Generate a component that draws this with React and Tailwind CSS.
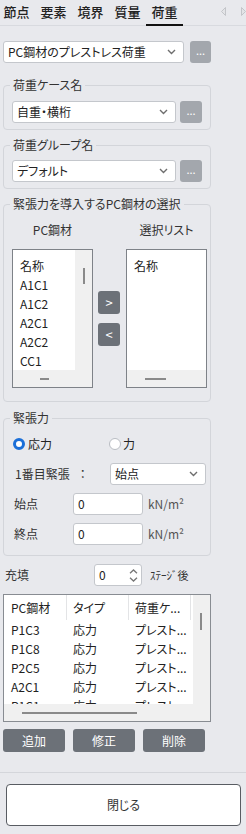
import React from 'react';

const tabs = ['節点', '要素', '境界', '質量', '荷重'];

const Chevron = () => (
  <svg width="9" height="6" viewBox="0 0 9 6" className="shrink-0">
    <path d="M1 1l3.5 3.5L8 1" stroke="#6e6e6e" strokeWidth="1.4" fill="none" />
  </svg>
);

const Select = ({ value, className }) => (
  <div className={`h-[22px] flex items-center justify-between bg-white border border-[#c4c7cc] rounded-[3px] pl-[4px] pr-[7px] ${className}`}>
    <span className="whitespace-nowrap">{value}</span>
    <Chevron />
  </div>
);

const DotsButton = ({ className }) => (
  <div className={`h-[22px] flex items-center justify-center bg-[#a3a7ad] rounded-[3px] text-white text-[11px] leading-none pb-[3px] ${className}`}>
    ...
  </div>
);

const Legend = ({ children }) => (
  <legend className="-ml-[2px] px-[3px] leading-[16px] text-[#333]">{children}</legend>
);

const leftItems = ['名称', 'A1C1', 'A1C2', 'A2C1', 'A2C2', 'CC1'];

const rows = [
  ['P1C3', '応力', 'プレスト...'],
  ['P1C8', '応力', 'プレスト...'],
  ['P2C5', '応力', 'プレスト...'],
  ['A2C1', '応力', 'プレスト...'],
  ['P1C1', '応力', 'プレスト...'],
];

export default function App() {
  return (
    <div className="w-[246px] h-[834px] overflow-hidden bg-[#e8e9ed] text-[12px] leading-[16px] text-[#222] font-['Noto_Sans_CJK_JP','Noto_Sans',sans-serif] [font-feature-settings:'palt']">
      {/* Tab bar */}
      <div className="flex h-[26px] border-b border-[#d8dadf]">
        <div className="flex -ml-[2px]">
          {tabs.map((t) => (
            <div
              key={t}
              className={
                t === '荷重'
                  ? 'h-[26px] w-[37px] flex justify-center pt-[4px] text-[13px] font-medium border-b-2 border-[#111]'
                  : 'h-[26px] w-[37px] flex justify-center pt-[4px] text-[13px] font-medium'
              }
            >
              {t}
            </div>
          ))}
        </div>
        <div className="ml-auto flex items-center gap-[15px] pb-[2px]">
          <svg width="5" height="9" viewBox="0 0 5 9">
            <path d="M4.5 0.5L0.5 4.5L4.5 8.5Z" fill="#e3e4e7" stroke="#c3c5c9" strokeWidth="1" />
          </svg>
          <svg width="5" height="9" viewBox="0 0 5 9">
            <path d="M0.5 0.5L4.5 4.5L0.5 8.5Z" fill="#e3e4e7" stroke="#c3c5c9" strokeWidth="1" />
          </svg>
        </div>
      </div>

      {/* Load type */}
      <div className="mt-[15px] ml-[3px] flex gap-[6px]">
        <Select value="PC鋼材のプレストレス荷重" className="w-[181px]" />
        <DotsButton className="w-[21px]" />
      </div>

      {/* Load case */}
      <fieldset className="mt-[14px] ml-[3px] w-[208px] border border-[#d3d5da] rounded-[4px] pl-[8px] pt-[8px] pb-[6px]">
        <Legend>荷重ケース名</Legend>
        <div className="flex gap-[4px]">
          <Select value="自重・横桁" className="w-[164px]" />
          <DotsButton className="w-[22px]" />
        </div>
      </fieldset>

      {/* Load group */}
      <fieldset className="mt-[7px] ml-[3px] w-[208px] border border-[#d3d5da] rounded-[4px] pl-[8px] pt-[7px] pb-[6px]">
        <Legend>荷重グループ名</Legend>
        <div className="flex gap-[4px]">
          <Select value="デフォルト" className="w-[164px]" />
          <DotsButton className="w-[22px]" />
        </div>
      </fieldset>

      {/* PC strand selection */}
      <fieldset className="mt-[7px] ml-[3px] w-[208px] border border-[#d3d5da] rounded-[4px] pl-[8px] pt-[8px] pb-[13px]">
        <Legend>緊張力を導入するPC鋼材の選択</Legend>
        <div className="flex h-[20px] items-center text-[#333]">
          <div className="w-[81px] text-center">PC鋼材</div>
          <div className="w-[33px]" />
          <div className="w-[81px] text-center">選択リスト</div>
        </div>
        <div className="mt-[9px] flex">
          <div className="w-[81px] h-[139px] border border-[#7e8288] bg-white flex flex-col">
            <div className="flex flex-1 min-h-0">
              <div className="flex-1 pl-[7px] pt-[6px] overflow-hidden">
                {leftItems.map((it) => (
                  <div key={it} className="h-[19px] flex items-center">{it}</div>
                ))}
              </div>
              <div className="w-[17px] bg-[#f0f0f0] flex justify-center">
                <div className="mt-[18px] w-[2px] h-[16px] bg-[#8a8a8a]" />
              </div>
            </div>
            <div className="h-[17px] bg-[#f0f0f0] flex items-center">
              <div className="ml-[27px] w-[9px] h-[2px] bg-[#8a8a8a]" />
            </div>
          </div>
          <div className="ml-[5px] w-[22px] flex flex-col justify-center gap-[9px]">
            <div className="h-[23px] rounded-[3px] bg-[#6c7178] text-white text-[13px] flex items-center justify-center">&gt;</div>
            <div className="h-[23px] rounded-[3px] bg-[#6c7178] text-white text-[13px] flex items-center justify-center">&lt;</div>
          </div>
          <div className="ml-[6px] w-[81px] h-[139px] border border-[#7e8288] bg-white flex flex-col">
            <div className="flex-1 pl-[7px] pt-[6px]">
              <div className="h-[19px] flex items-center">名称</div>
            </div>
            <div className="h-[17px] bg-[#f0f0f0] flex items-center">
              <div className="ml-[18px] w-[21px] h-[2px] bg-[#8a8a8a]" />
            </div>
          </div>
        </div>
      </fieldset>

      {/* Tension */}
      <fieldset className="mt-[8px] ml-[3px] w-[208px] border border-[#d3d5da] rounded-[4px] pl-[8px] pt-[9px] pb-[10px]">
        <Legend>緊張力</Legend>
        <div className="h-[18px] flex items-center">
          <div className="ml-[1px] w-[96px] flex items-center gap-[3px]">
            <span className="w-[12px] h-[12px] rounded-full border-[3.5px] border-[#1b6fd8] bg-white" />
            <span>応力</span>
          </div>
          <div className="flex items-center gap-[2px]">
            <span className="w-[12px] h-[12px] rounded-full border border-[#b9bdc3] bg-white" />
            <span>力</span>
          </div>
        </div>
        <div className="mt-[10px] flex items-center">
          <div className="w-[98px] flex items-center text-[#333]">
            <span className="ml-[3px]">1番目緊張</span>
            <span className="ml-[10px]">：</span>
          </div>
          <Select value="始点" className="w-[96px]" />
        </div>
        <div className="mt-[8px] flex items-center">
          <div className="w-[61px] pl-[2px] text-[#333]">始点</div>
          <div className="w-[70px] h-[22px] bg-white border border-[#c4c7cc] rounded-[3px] pl-[4px] flex items-center">0</div>
          <span className="ml-[5px] text-[#555]">kN/m²</span>
        </div>
        <div className="mt-[8px] flex items-center">
          <div className="w-[61px] pl-[2px] text-[#333]">終点</div>
          <div className="w-[70px] h-[22px] bg-white border border-[#c4c7cc] rounded-[3px] pl-[4px] flex items-center">0</div>
          <span className="ml-[5px] text-[#555]">kN/m²</span>
        </div>
      </fieldset>

      {/* Grout */}
      <div className="mt-[8px] ml-[5px] h-[22px] flex items-center">
        <div className="w-[89px] text-[#333]">充填</div>
        <div className="w-[48px] h-[22px] bg-white border border-[#c4c7cc] rounded-[3px] pl-[4px] pr-[3px] flex items-center justify-between">
          <span>0</span>
          <div className="flex flex-col gap-[3px]">
            <svg width="9" height="5" viewBox="0 0 9 5">
              <path d="M1 4.2L4.5 1L8 4.2" stroke="#777" strokeWidth="1.3" fill="none" />
            </svg>
            <svg width="9" height="5" viewBox="0 0 9 5">
              <path d="M1 0.8L4.5 4L8 0.8" stroke="#777" strokeWidth="1.3" fill="none" />
            </svg>
          </div>
        </div>
        <span className="ml-[8px] text-[11px] text-[#333]">ｽﾃｰｼﾞ後</span>
      </div>

      {/* Table */}
      <div className="mt-[8px] ml-[3px] w-[208px] h-[128px] border border-[#888c92] flex flex-col">
        <div className="flex h-[109px]">
          <div className="w-[189px] bg-white overflow-hidden">
            <div className="flex h-[25px]">
              <div className="w-[63px] pl-[7px] border-r border-[#e3e4e6] flex items-center">PC鋼材</div>
              <div className="w-[62px] pl-[6px] border-r border-[#e3e4e6] flex items-center">タイプ</div>
              <div className="w-[62px] pl-[6px] border-r border-[#e3e4e6] flex items-center whitespace-nowrap">荷重ケ...</div>
            </div>
            {rows.map((r, i) => (
              <div key={i} className="flex h-[19px] items-center">
                <div className="w-[63px] pl-[7px]">{r[0]}</div>
                <div className="w-[62px] pl-[6px]">{r[1]}</div>
                <div className="w-[62px] pl-[6px] whitespace-nowrap">{r[2]}</div>
              </div>
            ))}
          </div>
          <div className="w-[17px] bg-[#f0f0f0]">
            <div className="ml-[7px] mt-[18px] w-[2px] h-[17px] bg-[#8a8a8a]" />
          </div>
        </div>
        <div className="flex-1 bg-[#f0f0f0] flex items-center">
          <div className="ml-[18px] w-[115px] h-[2px] bg-[#8a8a8a]" />
        </div>
      </div>

      {/* Action buttons */}
      <div className="mt-[7px] ml-[3px] flex gap-[8px]">
        {['追加', '修正', '削除'].map((b) => (
          <div key={b} className="w-[62px] h-[23px] rounded-[3px] bg-[#6c7178] text-white flex items-center justify-center">
            {b}
          </div>
        ))}
      </div>

      <div className="mt-[20px] h-px bg-[#d4d6db]" />

      <div className="mt-[11px] ml-[6px] w-[235px] h-[42px] bg-white border border-[#585c62] rounded-[4px] flex items-center justify-center text-[#333]">
        閉じる
      </div>
    </div>
  );
}
